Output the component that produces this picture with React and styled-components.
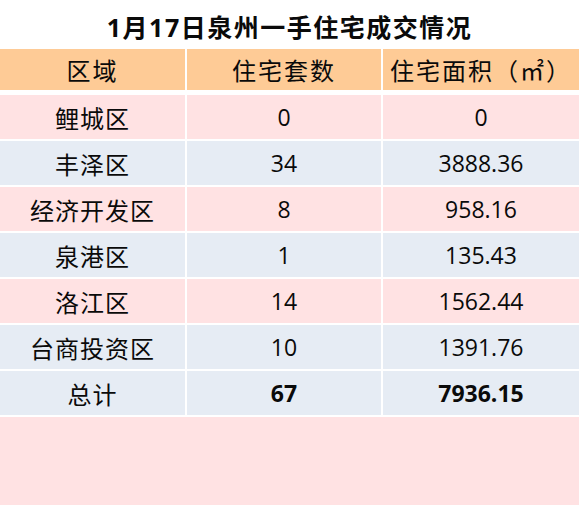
import { createGlobalStyle, styled } from "styled-components";

const rows = [
  { area: "鲤城区", units: "0", size: "0", tone: "pink" },
  { area: "丰泽区", units: "34", size: "3888.36", tone: "blue" },
  { area: "经济开发区", units: "8", size: "958.16", tone: "pink" },
  { area: "泉港区", units: "1", size: "135.43", tone: "blue" },
  { area: "洛江区", units: "14", size: "1562.44", tone: "pink" },
  { area: "台商投资区", units: "10", size: "1391.76", tone: "blue" },
];

const tones = {
  head: "#fecb96",
  pink: "#ffe2e3",
  blue: "#e6ecf4",
};

// the whole sales table
const App = () => {
  return (
    <Page>
      <GlobalStyle />
      <Title>1月17日泉州一手住宅成交情况</Title>
      <Table>
        <Cell $tone="head" $head>区域</Cell>
        <Cell $tone="head" $head>住宅套数</Cell>
        <Cell $tone="head" $head>住宅面积（㎡）</Cell>
        {rows.map((row) => (
          <Row key={row.area}>
            <Cell $tone={row.tone}>{row.area}</Cell>
            <Cell $tone={row.tone} $num>{row.units}</Cell>
            <Cell $tone={row.tone} $num>{row.size}</Cell>
          </Row>
        ))}
        <Cell $tone="blue">总计</Cell>
        <Cell $tone="blue" $num $bold>67</Cell>
        <Cell $tone="blue" $num $bold>7936.15</Cell>
      </Table>
      <Filler />
    </Page>
  );
};

export default App;

// styling
const GlobalStyle = createGlobalStyle`
  html, body {
    margin: 0;
    padding: 0;
    background: #ffffff;
  }
`;

const Page = styled.div`
  display: flex;
  flex-direction: column;
  height: 100vh;
  font-family: "Noto Sans CJK SC", sans-serif;
  color: #0a0a0a;
`;

const Title = styled.div`
  height: 49px;
  flex-shrink: 0;
  display: flex;
  align-items: center;
  justify-content: center;
  font-family: "Open Sans", "Noto Sans CJK SC", sans-serif;
  font-size: 25px;
  font-weight: bold;
  letter-spacing: 1.5px;
  padding-top: 2px;
  box-sizing: border-box;
`;

const Table = styled.div`
  display: grid;
  grid-template-columns: 185px 194px 1fr;
  grid-template-rows: 44px repeat(7, 44px);
  column-gap: 2px;
  row-gap: 2px;
`;

const Row = styled.div`
  display: contents;
`;

const Cell = styled.div`
  display: flex;
  align-items: center;
  justify-content: center;
  background: ${(p) => tones[p.$tone]};
  font-family: ${(p) =>
    p.$num ? `"Open Sans", sans-serif` : `"Noto Sans CJK SC", sans-serif`};
  font-size: ${(p) => (p.$num ? "23px" : "24px")};
  font-weight: ${(p) => (p.$bold ? "bold" : p.$num ? "500" : "normal")};
  letter-spacing: ${(p) => (p.$num ? "0" : p.$head ? "2px" : "1px")};
  white-space: nowrap;
  margin-bottom: ${(p) => (p.$head ? "3px" : "0")};
`;

const Filler = styled.div`
  flex: 1;
  margin-top: 2px;
  background: ${tones.pink};
`;
